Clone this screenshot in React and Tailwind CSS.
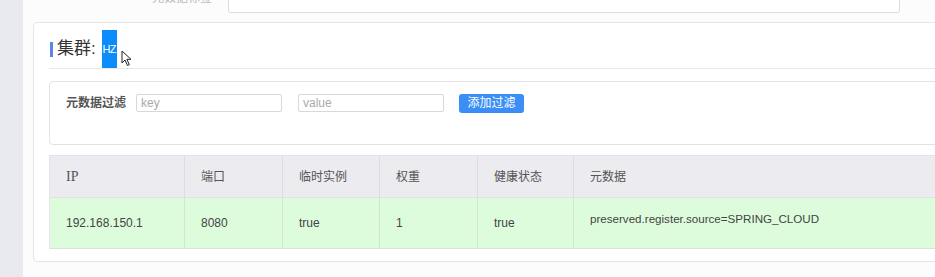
import React from "react";

const font = { fontFamily: '"Liberation Sans", "Noto Sans CJK SC", sans-serif' };

const cols = [
  { key: "ip", title: "IP", w: "w-[135px]" },
  { key: "port", title: "端口", w: "w-[98px]" },
  { key: "ephemeral", title: "临时实例", w: "w-[97px]" },
  { key: "weight", title: "权重", w: "w-[98px]" },
  { key: "healthy", title: "健康状态", w: "w-[96px]" },
  { key: "meta", title: "元数据", w: "flex-1" },
];

const row = {
  ip: "192.168.150.1",
  port: "8080",
  ephemeral: "true",
  weight: "1",
  healthy: "true",
  meta: "preserved.register.source=SPRING_CLOUD",
};

function Cursor() {
  return (
    <svg width="11" height="17" viewBox="0 0 11 17" className="absolute left-[72px] top-[27px]">
      <path d="M1 1 L1 13 L4 10 L6.5 15.5 L8.3 14.7 L5.9 9.3 L10 9.3 Z" fill="#fff" stroke="#222" strokeWidth="1" strokeLinejoin="round" />
    </svg>
  );
}

export default function App() {
  return (
    <div className="flex w-[935px] h-[277px] overflow-hidden bg-[#fcfcfd] text-[#333]" style={font}>
      <div className="w-[23px] shrink-0 bg-[#e9eaf0]" />
      <div className="flex-1 flex flex-col pl-[10px] min-w-0">
        {/* top form row, cut off by the viewport */}
        <div className="h-[13px] overflow-hidden flex items-end">
          <div className="w-[195px] h-[30px] flex items-center justify-end pr-[16px] text-[12px] text-[#bbb]">
            元数据标签
          </div>
          <div className="w-[672px] h-[30px] border border-[#dcdcdc] rounded-[3px] bg-white" />
        </div>

        {/* card */}
        <div className="mt-[9px] w-[930px] shrink-0 border border-[#e6e6ea] rounded-[4px] bg-white px-[15px] pb-[12px]">
          <div className="relative flex items-end h-[46px] border-b border-[#e8e8ec]">
            <div className="flex items-center h-[38px]">
              <div className="w-[3px] h-[15px] bg-[#5a86e6] ml-[1px] mr-[4px]" />
              <span className="text-[17px] text-[#333]">集群:</span>
              <span className="ml-[6px] w-[15px] h-[38px] bg-[#0b8cfb] text-white text-[11px] flex items-center justify-center tracking-[-0.5px]">HZ</span>
            </div>
            <Cursor />
          </div>

          {/* filter */}
          <div className="mt-[12px] h-[64px] border border-[#e3e3e6] rounded-[4px] flex items-start pt-[12px] pl-[16px]">
            <span className="text-[12px] font-bold text-[#555] leading-[18px]">元数据过滤</span>
            <input
              placeholder="key"
              className="ml-[10px] w-[146px] h-[18px] border border-[#d8d8dc] rounded-[2px] px-[4px] text-[12px] placeholder:text-[#aaa] outline-none"
            />
            <input
              placeholder="value"
              className="ml-[16px] w-[146px] h-[18px] border border-[#d8d8dc] rounded-[2px] px-[4px] text-[12px] placeholder:text-[#aaa] outline-none"
            />
            <button className="ml-[15px] w-[65px] h-[19px] bg-[#3a8ef6] rounded-[3px] text-white text-[12px] leading-[19px]">
              添加过滤
            </button>
          </div>

          {/* table */}
          <div className="mt-[10px] border-t border-l border-[#e3e3e8]">
            <div className="flex h-[42px] bg-[#ebebf0] border-b border-[#e0e0e6]">
              {cols.map((c, i) => (
                <div
                  key={c.key}
                  className={`${c.w} flex items-center pl-[16px] text-[12px] text-[#555] ${i < cols.length - 1 ? "border-r border-[#dcdce2]" : ""}`}
                  style={c.key === "ip" ? { fontFamily: '"Liberation Serif", serif', fontSize: 14 } : undefined}
                >
                  {c.title}
                </div>
              ))}
            </div>
            <div className="flex h-[51px] bg-[#ddfcdc] border-b border-[#d6e6d6]">
              {cols.map((c, i) => (
                <div
                  key={c.key}
                  className={`${c.w} flex pl-[16px] text-[#444] ${c.key === "meta" ? "items-start pt-[12px] text-[11.6px]" : "items-center text-[12px]"} ${i < cols.length - 1 ? "border-r border-[#cfe6cf]" : ""}`}
                >
                  {row[c.key]}
                </div>
              ))}
            </div>
          </div>
        </div>
      </div>
    </div>
  );
}
